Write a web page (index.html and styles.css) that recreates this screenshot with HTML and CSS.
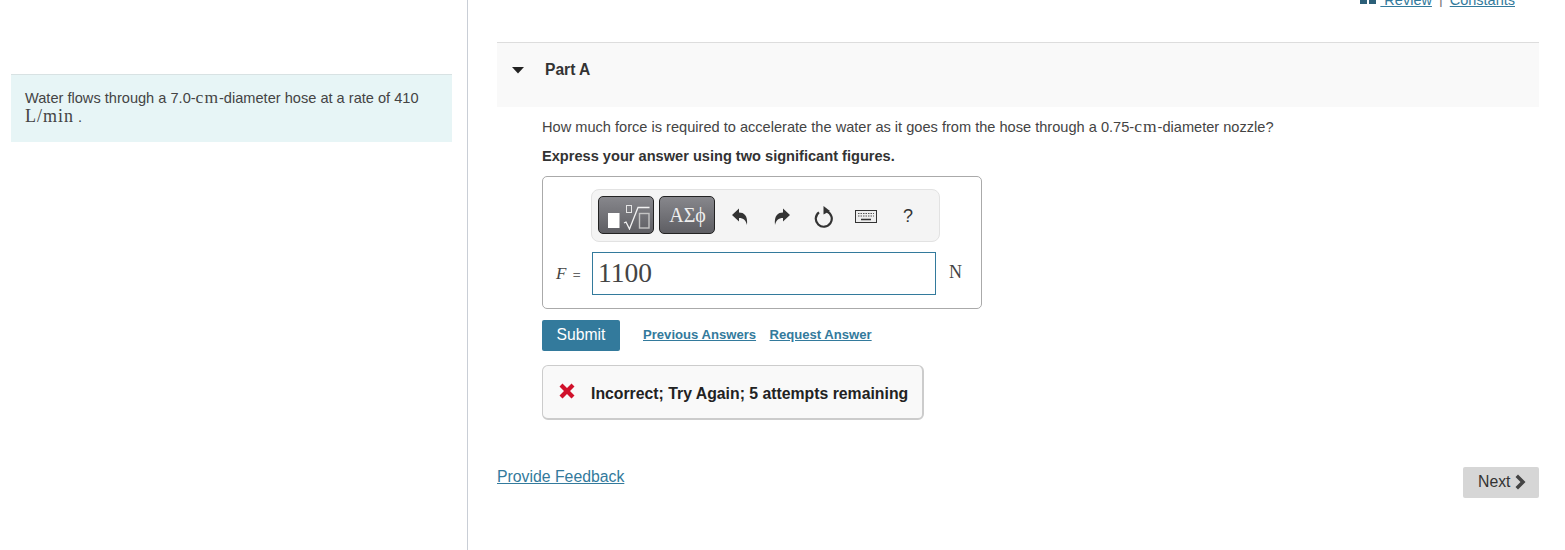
FILE: index.html
```html
<!DOCTYPE html>
<html lang="en">

<head>
    <meta charset="UTF-8">
    <title>Part A</title>
    <link rel="stylesheet" href="styles.css">
</head>

<body>
    <div class="pagina">
        <!-- Left column -->
        <aside class="lateral">
            <div class="intro">
                Water flows through a 7.0-<span class="mate">cm</span>-diameter hose at a rate of 410
                <span class="mate mate-grande">L/min</span> .
            </div>
        </aside>

        <!-- Right column -->
        <main class="principal">
            <div class="enlaces-top">
                <svg class="libro" width="16" height="4" viewBox="0 0 16 4"><path d="M0 0h7v4H0zM9 0h7v4H9z" fill="#2b5f78"/></svg>
                <a href="#">&nbsp;Review</a>
                <span class="sep">|</span>
                <a href="#">Constants</a>
            </div>

            <section class="parte">
                <header class="parte-cabecera">
                    <svg class="flecha" width="12" height="7" viewBox="0 0 12 7"><path d="M0 0h12L6 6.500z" fill="#222"/></svg>
                    <h2>Part A</h2>
                </header>

                <div class="parte-cuerpo">
                    <p class="pregunta">How much force is required to accelerate the water as it goes from the hose through a 0.75-<span class="mate">cm</span>-diameter nozzle?</p>
                    <p class="instruccion">Express your answer using two significant figures.</p>

                    <div class="respuesta">
                        <div class="barra">
                            <button class="btn-mate btn-plantilla" type="button">
                                <svg width="48" height="30" viewBox="0 0 48 30">
                                    <rect x="6" y="13" width="11.500" height="15" fill="#fff"/>
                                    <rect x="24.500" y="5.500" width="5" height="7" fill="none" stroke="#e4e4e4"/>
                                    <path d="M22 23l2-1 3.500 7L36 7.500h11.500" fill="none" stroke="#f2f2f2" stroke-width="1.300"/>
                                    <rect x="37.500" y="13.500" width="9.500" height="14.500" fill="none" stroke="#c4c4c4" stroke-width="1.400"/>
                                </svg>
                            </button>
                            <button class="btn-mate btn-griego" type="button">ΑΣϕ</button>
                            <div class="herramienta herramienta-primera">
                                <svg width="16" height="18" viewBox="0 0 16 18"><path d="M0 7l7-6.500V4.500c5 0 9 3 8 12.500-1-4.500-3.500-7-8-7v3.500z" fill="#333"/></svg>
                            </div>
                            <div class="herramienta">
                                <svg width="16" height="18" viewBox="0 0 16 18"><path d="M16 7L9 .5V4.500C4 4.500 0 7.500 1 17c1-4.500 3.500-7 8-7v3.500z" fill="#333"/></svg>
                            </div>
                            <div class="herramienta">
                                <svg width="20" height="22" viewBox="0 0 20 22"><path d="M5 6.300a8 8 0 1 0 8-.9" fill="none" stroke="#333" stroke-width="2.200"/><path d="M9.500 0l6.500 5-6.500 3.500z" fill="#333"/></svg>
                            </div>
                            <div class="herramienta">
                                <svg width="22" height="13" viewBox="0 0 22 13">
                                    <rect x=".5" y=".5" width="21" height="12" fill="#eee" stroke="#333"/>
                                    <path d="M3 3.500h16M3 6h16" stroke="#555" stroke-width="1.200" stroke-dasharray="1.500 1"/>
                                    <path d="M6 9.500h10" stroke="#333" stroke-width="1.500"/>
                                </svg>
                            </div>
                            <div class="herramienta ayuda">?</div>
                        </div>

                        <div class="fila-valor">
                            <label class="etiqueta"><i>F</i> <span>=</span></label>
                            <div class="campo">1100</div>
                            <span class="unidad">N</span>
                        </div>
                    </div>

                    <div class="acciones">
                        <button class="enviar" type="button">Submit</button>
                        <a href="#">Previous Answers</a>
                        <a href="#">Request Answer</a>
                    </div>

                    <div class="aviso">
                        <svg width="16" height="16" viewBox="0 0 16 16"><path d="M3.500 0.500L8 5l4.500-4.500 3 3L11 8l4.500 4.500-3 3L8 11l-4.500 4.500-3-3L5 8 .5 3.500z" fill="#d0112b"/></svg>
                        <span>Incorrect; Try Again; 5 attempts remaining</span>
                    </div>
                </div>
            </section>

            <footer class="pie">
                <a href="#">Provide Feedback</a>
                <button class="siguiente" type="button">Next
                    <svg width="11" height="16" viewBox="0 0 11 16"><path d="M3 .5l7.500 7.500L3 15.500 .5 13l5-5-5-5z" fill="#444"/></svg>
                </button>
            </footer>
        </main>
    </div>
</body>
</html>
```

FILE: styles.css
```css
* {
    margin: 0;
    padding: 0;
    box-sizing: border-box;
}

html,
body {
    height: 100%;
    overflow: hidden;
}

body {
    background: #fff;
    color: #333;
    font-family: 'Liberation Sans', Arial, sans-serif;
    font-size: 14.6px;
}

a {
    color: #337a9c;
}

.pagina {
    display: flex;
    height: 550px;
}

.lateral {
    width: 468px;
    flex-shrink: 0;
    padding: 74px 15px 0 11px;
    border-right: 1px solid #c9ced6;
}

.intro {
    height: 68px;
    padding: 13px 14px 0;
    background: #e7f5f6;
    border-top: 1px solid #d8e2e3;
    line-height: 18px;
    font-size: 14.6px;
    color: #444;
}

.mate {
    font-family: 'Liberation Serif', serif;
    font-size: 17.5px;
    letter-spacing: 1px;
}

.mate-grande {
    display: inline-block;
    line-height: 19px;
    font-size: 18px;
    letter-spacing: 1px;
}

.principal {
    flex: 1;
    min-width: 0;
    padding: 0 26px 0 29px;
}

.enlaces-top {
    display: flex;
    justify-content: flex-end;
    align-items: flex-end;
    gap: 6px;
    height: 7px;
    padding-right: 24px;
    font-size: 14.5px;
    line-height: 14px;
    overflow: hidden;
}

.libro {
    flex-shrink: 0;
    align-self: flex-start;
    margin-right: -2px;
}

.sep {
    color: #777;
    margin: 0 1px;
}

.parte {
    margin-top: 35px;
}

.parte-cabecera {
    display: flex;
    align-items: center;
    height: 65px;
    padding: 0 0 10px 15px;
    background: #f9f9f9;
    border-top: 1px solid #ddd;
}

.parte-cabecera h2 {
    margin: 0 0 1px 21px;
    font-size: 15.6px;
    font-weight: bold;
    color: #333;
}

.parte-cuerpo {
    padding: 10px 0 0 45px;
}

.pregunta {
    line-height: 18px;
    font-size: 14.6px;
    color: #444;
}

.instruccion {
    margin-top: 11px;
    line-height: 18px;
    font-size: 14.6px;
    font-weight: bold;
}

.respuesta {
    width: 440px;
    height: 133px;
    margin-top: 11px;
    padding: 12px 0 0 12px;
    border: 1px solid #aaa;
    border-radius: 5px;
}

.barra {
    display: flex;
    align-items: center;
    width: 349px;
    height: 53px;
    margin-left: 36px;
    padding: 0 0 2px 6px;
    background: #f4f4f4;
    border: 1px solid #e2e2e2;
    border-radius: 8px;
}

.btn-mate {
    height: 38px;
    width: 56px;
    margin-right: 5px;
    display: flex;
    align-items: center;
    justify-content: center;
    background: linear-gradient(#87878c, #5e5e63);
    border: 1px solid #222;
    border-radius: 5px;
    color: #eee;
    font-family: 'Liberation Serif', serif;
    font-size: 20px;
}

.btn-griego {
    margin-right: 0;
    padding: 2px 0 0 1px;
}

.herramienta {
    display: flex;
    justify-content: center;
    width: 42px;
    margin-top: 4px;
    color: #333;
}

.herramienta-primera {
    margin-left: 4px;
}

.ayuda {
    font-family: 'Liberation Sans', sans-serif;
    font-size: 18px;
}

.fila-valor {
    display: flex;
    align-items: center;
    margin-top: 10px;
}

.etiqueta {
    width: 37px;
    padding-left: 1px;
    font-family: 'Liberation Serif', serif;
    font-size: 17px;
    white-space: nowrap;
    color: #444;
}

.etiqueta span {
    margin-left: 2px;
    font-family: 'Liberation Sans', sans-serif;
    font-size: 13.500px;
    color: #666;
}

.campo {
    width: 344px;
    height: 43px;
    padding-left: 5px;
    border: 1px solid #337a9c;
    font-family: 'Liberation Serif', serif;
    font-size: 27.5px;
    line-height: 39px;
    color: #444;
}

.unidad {
    margin: 0 0 2px 13px;
    font-family: 'Liberation Serif', serif;
    font-size: 18px;
    color: #444;
}

.acciones {
    display: flex;
    align-items: center;
    gap: 13.500px;
    margin-top: 11px;
    font-size: 13.100px;
    font-weight: bold;
}

.acciones a {
    margin-bottom: 2px;
}

.enviar {
    width: 78px;
    height: 31px;
    margin-right: 9.500px;
    padding-bottom: 2px;
    background: #337a9c;
    border: none;
    border-radius: 2px;
    color: #fff;
    font-family: 'Liberation Sans', sans-serif;
    font-size: 15.700px;
}

.aviso {
    display: flex;
    align-items: center;
    gap: 16px;
    width: 382px;
    height: 55px;
    margin-top: 14px;
    padding: 0 0 0 16px;
    background: #f9f9f9;
    border: 1px solid #ccc;
    border-bottom-width: 2px;
    border-right-width: 2px;
    border-radius: 6px;
    font-size: 15.800px;
    font-weight: bold;
    color: #222;
}

.aviso svg {
    margin-bottom: 2px;
}

.aviso span {
    margin-top: 3px;
}

.pie {
    display: flex;
    justify-content: space-between;
    align-items: flex-start;
    margin-top: 47px;
}

.pie a {
    margin-top: 1px;
    font-size: 15.800px;
}

.siguiente {
    display: flex;
    align-items: center;
    gap: 5px;
    width: 76px;
    height: 31px;
    padding: 0 0 2px 15px;
    background: #d6d6d6;
    border: none;
    border-radius: 2px;
    color: #333;
    font-family: 'Liberation Sans', sans-serif;
    font-size: 15.800px;
}
```
